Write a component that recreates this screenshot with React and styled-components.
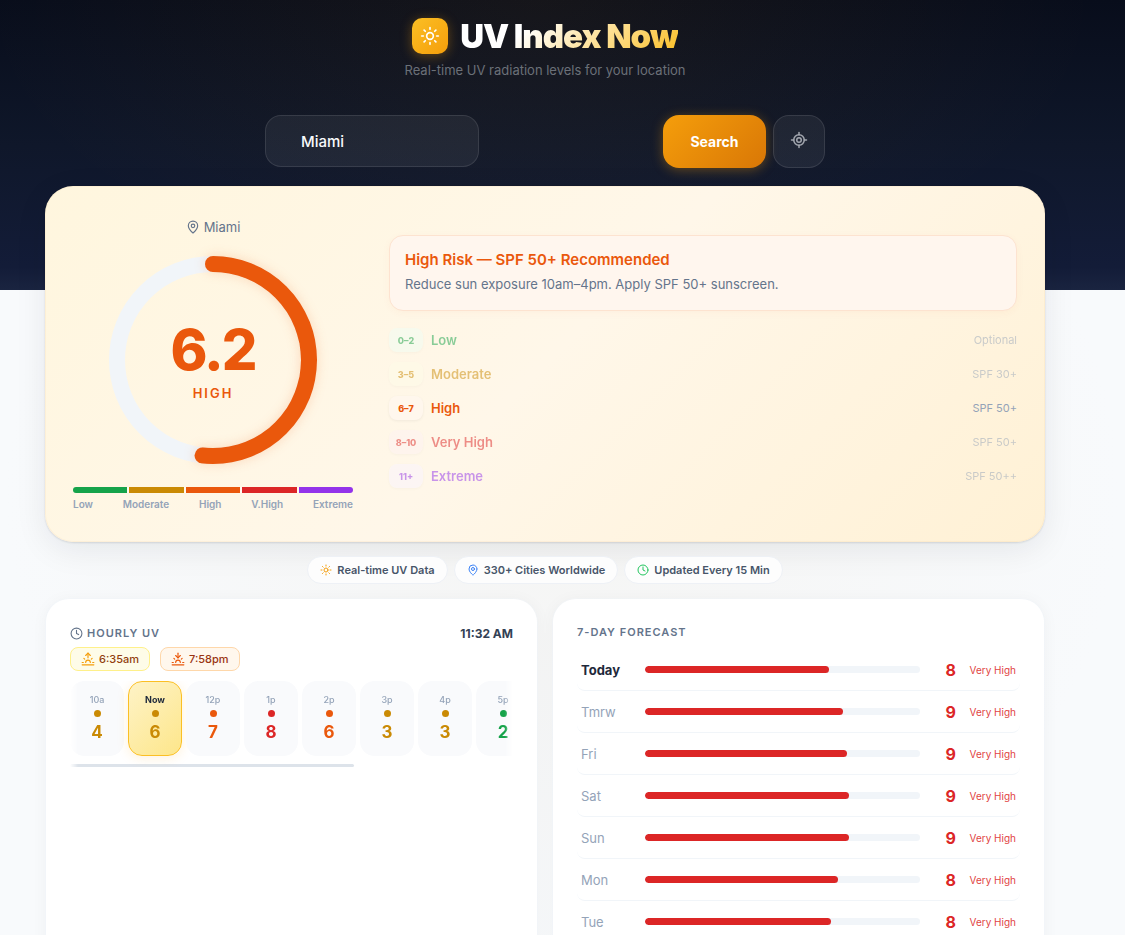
import React, { useState } from "react";
import styled, { createGlobalStyle } from "styled-components";
import { Clock, LocateFixed, MapPin, Sun, Sunrise, Sunset } from "lucide-react";

const body = `Inter, "Open Sans", sans-serif`;

const GlobalStyle = createGlobalStyle`
  * {
    box-sizing: border-box;
  }
  body {
    margin: 0;
    background-color: #f8fafc;
    font-family: ${body};
    color: #1e293b;
  }
  h1, h2, p, ul, ol {
    margin: 0;
    padding: 0;
  }
  ul, ol {
    list-style: none;
  }
  button, input {
    font-family: inherit;
  }
`;
const Page = styled.div`
  min-height: 100vh;
  padding: 18px 80px 24px 45px;
  background:
    radial-gradient(ellipse 50% 300px at 48% 0, rgba(245, 158, 11, 0.06), transparent) no-repeat,
    linear-gradient(180deg, #080d1b 0%, #0f172a 50%, #131c38 92%, #1a2440 100%) 0 0 / 100% 290px no-repeat,
    radial-gradient(ellipse at 50% 50%, #f5f5f4 0%, #f8fafc 70%);
`;
const Container = styled.div`
  max-width: 1000px;
  margin: 0 auto;
`;
const Header = styled.header`
  display: flex;
  flex-direction: column;
  align-items: center;
`;
const Brand = styled.div`
  display: flex;
  align-items: center;
  gap: 12px;
  height: 36px;
`;
const Logo = styled.span`
  width: 36px;
  height: 36px;
  border-radius: 10px;
  display: flex;
  align-items: center;
  justify-content: center;
  color: white;
  background: linear-gradient(135deg, #fbbf24, #f59e0b);
  box-shadow: 0 2px 12px rgba(245, 158, 11, 0.35);
`;
const Title = styled.h1`
  font-size: 33px;
  line-height: 38px;
  font-weight: 900;
  letter-spacing: -1px;
  color: transparent;
  background: linear-gradient(135deg, #ffffff 30%, #fbbf24 100%);
  background-clip: text;
`;
const Tagline = styled.p`
  margin-top: 6px;
  font-size: 13px;
  line-height: 20px;
  color: #6b7078;
`;
const SearchForm = styled.form`
  width: 100%;
  max-width: 560px;
  margin-top: 35px;
  display: flex;
  gap: 7px;
`;
const SearchField = styled.div`
  flex: 1;
`;
const SearchInput = styled.input`
  width: 214px;
  height: 52px;
  padding: 0 35px;
  border-radius: 16px;
  border: 1px solid rgba(255, 255, 255, 0.1);
  background-color: rgba(255, 255, 255, 0.06);
  color: #f8fafc;
  font-size: 15px;
  font-weight: 500;
  outline: none;
`;
const SearchButton = styled.button`
  width: 103px;
  height: 53px;
  border: none;
  border-radius: 16px;
  color: white;
  font-size: 14px;
  font-weight: 700;
  cursor: pointer;
  background: linear-gradient(135deg, #f59e0b, #d97706);
  box-shadow: 0 2px 12px rgba(245, 158, 11, 0.35);
`;
const LocateButton = styled.button`
  width: 52px;
  height: 53px;
  padding: 0 0 3px;
  display: flex;
  align-items: center;
  justify-content: center;
  border-radius: 16px;
  border: 1px solid rgba(255, 255, 255, 0.1);
  background-color: rgba(255, 255, 255, 0.06);
  color: #a3a7af;
  cursor: pointer;
`;
const Hero = styled.section`
  margin-top: 18px;
  padding: 31px 28px;
  display: flex;
  align-items: center;
  gap: 36px;
  border-radius: 28px;
  background: linear-gradient(135deg, #fff6de 0%, #fff7e9 50%, #fff1d5 100%);
  box-shadow:
    inset 0 0 0 1px rgba(234, 170, 80, 0.08),
    0 1px 2px rgba(15, 23, 42, 0.12),
    0 8px 32px rgba(15, 23, 42, 0.08);
`;
const Gauge = styled.div`
  width: 280px;
  flex-shrink: 0;
`;
const Place = styled.p`
  display: flex;
  align-items: center;
  justify-content: center;
  gap: 4px;
  font-size: 13px;
  line-height: 20px;
  color: #64748b;
`;
const Dial = styled.div`
  display: grid;
  place-items: center;
  margin: 13px 0 17px;

  & > * {
    grid-area: 1 / 1;
  }
`;
const DialSvg = styled.svg`
  display: block;
  overflow: visible;
`;
const Arc = styled.circle`
  filter: drop-shadow(0 0 6px rgba(234, 88, 12, 0.2));
`;
const Reading = styled.div`
  padding-top: 2px;
  text-align: center;
  color: #ea580c;
`;
const ReadingValue = styled.div`
  font-size: 56px;
  line-height: 60px;
  font-weight: 800;
  letter-spacing: -2px;
`;
const ReadingLevel = styled.div`
  margin-top: 4px;
  font-size: 13px;
  line-height: 18px;
  font-weight: 600;
  letter-spacing: 2px;
`;
const Scale = styled.div`
  display: flex;
  gap: 2px;
  height: 6px;
  border-radius: 3px;
  overflow: hidden;
  background-color: #fffaf2;
`;
const ScalePart = styled.span`
  flex: 1;
  background-color: ${(props) => props.$color};
`;
const ScaleLabels = styled.div`
  display: flex;
  justify-content: space-between;
  margin-top: 4px;
  font-size: 10px;
  line-height: 14px;
  font-weight: 600;
  color: #94a3b8;
`;
const Advice = styled.div`
  flex: 1;
  min-width: 0;
`;
const Alert = styled.div`
  padding: 14px 15px 16px;
  margin-bottom: 12px;
  border-radius: 14px;
  border: 1px solid #fde3d0;
  background-color: #fff6ee;
  box-shadow: 0 2px 8px rgba(234, 88, 12, 0.04);
`;
const AlertTitle = styled.h2`
  font-size: 15px;
  line-height: 20px;
  font-weight: 600;
  color: #ea580c;
`;
const AlertText = styled.p`
  margin-top: 4px;
  font-size: 13px;
  line-height: 20px;
  color: #64748b;
`;
const Level = styled.li`
  display: flex;
  align-items: center;
  gap: 8px;
  height: 34px;
  opacity: ${(props) => (props.$active ? 1 : 0.5)};
`;
const Range = styled.span`
  width: 34px;
  height: 24px;
  display: flex;
  align-items: center;
  justify-content: center;
  border-radius: 8px;
  font-size: 9px;
  font-weight: 800;
  color: ${(props) => props.$color};
  background-color: ${(props) => props.$bg};
  box-shadow: 0 1px 3px rgba(15, 23, 42, 0.06);
`;
const LevelName = styled.span`
  flex: 1;
  font-size: 13px;
  font-weight: 600;
  color: ${(props) => props.$color};
`;
const Spf = styled.span`
  font-size: 11px;
  color: #94a3b8;
`;
const Chips = styled.ul`
  margin: 14px 0;
  display: flex;
  justify-content: center;
  gap: 6px;
`;
const Chip = styled.li`
  height: 28px;
  padding: 0 12px;
  display: flex;
  align-items: center;
  gap: 5px;
  border-radius: 14px;
  border: 1px solid #eef1f6;
  background-color: #fdfdfd;
  font-size: 11px;
  font-weight: 600;
  color: #475569;

  & > svg {
    color: ${(props) => props.$color};
  }
`;
const Panels = styled.div`
  display: grid;
  grid-template-columns: 1fr 1fr;
  gap: 14px;
`;
const Panel = styled.section`
  min-width: 0;
  padding: 24px;
  border-radius: 24px;
  border: 1px solid rgba(241, 245, 249, 0.4);
  background-color: white;
  background-clip: padding-box;
  box-shadow: 0 2px 16px rgba(15, 23, 42, 0.04);
`;
const PanelHead = styled.div`
  display: flex;
  align-items: center;
  justify-content: space-between;
  height: 20px;
`;
const PanelTitle = styled.h2`
  display: flex;
  align-items: center;
  gap: 4px;
  font-size: 11px;
  line-height: 18px;
  font-weight: 600;
  letter-spacing: 1px;
  color: #64748b;
`;
const LocalTime = styled.time`
  font-size: 12px;
  font-weight: 700;
  color: #334155;
`;
const SunTimes = styled.div`
  display: flex;
  gap: 10px;
  margin: 4px 0 10px;
`;
const SunTime = styled.span`
  height: 24px;
  padding: 0 10px;
  display: flex;
  align-items: center;
  gap: 4px;
  border-radius: 8px;
  font-size: 11px;
  font-weight: 500;
  border: 1px solid ${(props) => (props.$set ? "#fed7aa" : "#fef08a")};
  background-color: ${(props) => (props.$set ? "#fff7ed" : "#fefce8")};
  color: ${(props) => (props.$set ? "#9a3412" : "#92400e")};

  & > svg {
    color: ${(props) => (props.$set ? "#ea580c" : "#f59e0b")};
  }
`;
const HourScroll = styled.div`
  overflow: hidden;
  mask-image: linear-gradient(90deg, transparent, black 8px, black calc(100% - 8px), transparent);
`;
const Hours = styled.ol`
  display: flex;
  gap: 4px;
  padding-bottom: 8px;
`;
const Hour = styled.li`
  flex: 0 0 54px;
  height: 75px;
  padding-top: 12px;
  display: flex;
  flex-direction: column;
  align-items: center;
  border-radius: 14px;
  border: 1px solid ${(props) => (props.$now ? "#fbbf24" : "#f9fafc")};
  background: ${(props) => (props.$now ? "linear-gradient(135deg, #fef3c7, #fde68a)" : "#f9fafc")};
  box-shadow: ${(props) => (props.$now ? "0 2px 12px rgba(245, 158, 11, 0.15)" : "none")};
`;
const HourLabel = styled.span`
  font-size: 9px;
  line-height: 12px;
  font-weight: ${(props) => (props.$now ? 700 : 500)};
  color: ${(props) => (props.$now ? "#1e293b" : "#94a3b8")};
`;
const Dot = styled.span`
  width: 7px;
  height: 7px;
  margin: 4px 0;
  border-radius: 50%;
  background-color: ${(props) => props.$color};
`;
const HourValue = styled.span`
  margin-top: 1px;
  font-size: 17px;
  line-height: 20px;
  font-weight: 700;
  color: ${(props) => props.$color};
`;
const ScrollThumb = styled.div`
  width: 64%;
  height: 3px;
  border-radius: 2px;
  background-color: #dde3ea;
`;
const Days = styled.ol`
  margin-top: 8px;
`;
const Day = styled.li`
  height: 42px;
  padding: 0 4px;
  display: grid;
  grid-template-columns: 52px 1fr 24px 48px;
  align-items: center;
  gap: 12px;
  border-radius: 8px;
  border-bottom: 1px solid #f1f5f9;
`;
const DayName = styled.span`
  font-size: 13px;
  font-weight: ${(props) => (props.$today ? 700 : 400)};
  color: ${(props) => (props.$today ? "#1e293b" : "#94a3b8")};
`;
const Track = styled.div`
  height: 7px;
  border-radius: 4px;
  overflow: hidden;
  background-color: #f1f5f9;
`;
const Fill = styled.div`
  height: 100%;
  border-radius: 4px;
  background-color: #dc2626;
`;
const DayValue = styled.span`
  font-size: 16px;
  font-weight: 700;
  text-align: right;
  color: #dc2626;
`;
const DayLevel = styled.span`
  font-size: 10px;
  text-align: right;
  white-space: nowrap;
  color: #e14444;
`;

const levels = [
  { name: "Low", short: "Low", range: "0–2", spf: "Optional", color: "#16a34a", bg: "#f0fdf4" },
  { name: "Moderate", short: "Moderate", range: "3–5", spf: "SPF 30+", color: "#ca8a04", bg: "#fefce8" },
  { name: "High", short: "High", range: "6–7", spf: "SPF 50+", color: "#ea580c", bg: "#fff7ed" },
  { name: "Very High", short: "V.High", range: "8–10", spf: "SPF 50+", color: "#dc2626", bg: "#fef2f2" },
  { name: "Extreme", short: "Extreme", range: "11+", spf: "SPF 50++", color: "#9333ea", bg: "#faf5ff" },
];
const hours = [
  { label: "10a", uv: 4, color: "#ca8a04" },
  { label: "Now", uv: 6, color: "#ca8a04" },
  { label: "12p", uv: 7, color: "#ea580c" },
  { label: "1p", uv: 8, color: "#dc2626" },
  { label: "2p", uv: 6, color: "#ea580c" },
  { label: "3p", uv: 3, color: "#ca8a04" },
  { label: "4p", uv: 3, color: "#ca8a04" },
  { label: "5p", uv: 2, color: "#16a34a" },
];
const days = [
  { name: "Today", uv: 8, fill: 67 },
  { name: "Tmrw", uv: 9, fill: 72 },
  { name: "Fri", uv: 9, fill: 73.5 },
  { name: "Sat", uv: 9, fill: 74 },
  { name: "Sun", uv: 9, fill: 74 },
  { name: "Mon", uv: 8, fill: 70 },
  { name: "Tue", uv: 8, fill: 67.5 },
];

const circumference = 2 * Math.PI * 96;

const App = () => {
  const [city, setCity] = useState("Miami");
  return (
    <Page>
      <GlobalStyle />
      <Container>
        <Header>
          <Brand>
            <Logo>
              <Sun size={20} />
            </Logo>
            <Title>UV Index Now</Title>
          </Brand>
          <Tagline>Real-time UV radiation levels for your location</Tagline>
          <SearchForm onSubmit={(e) => e.preventDefault()}>
            <SearchField>
              <SearchInput aria-label="City" value={city} onChange={(e) => setCity(e.target.value)} />
            </SearchField>
            <SearchButton type="submit">Search</SearchButton>
            <LocateButton type="button" aria-label="Use my location">
              <LocateFixed size={18} />
            </LocateButton>
          </SearchForm>
        </Header>
        <Hero>
          <Gauge>
            <Place>
              <MapPin size={14} />
              Miami
            </Place>
            <Dial>
              <DialSvg width="220" height="220" viewBox="0 0 220 220" aria-hidden="true">
                <circle cx="110" cy="110" r="96" fill="none" stroke="#f1f5f9" strokeWidth="16" />
                <Arc
                  cx="110"
                  cy="110"
                  r="96"
                  fill="none"
                  stroke="#ea580c"
                  strokeWidth="16"
                  strokeLinecap="round"
                  strokeDasharray={`${(circumference * 6.2) / 12} ${circumference}`}
                  transform="rotate(-90 110 110)"
                />
              </DialSvg>
              <Reading>
                <ReadingValue>6.2</ReadingValue>
                <ReadingLevel>HIGH</ReadingLevel>
              </Reading>
            </Dial>
            <Scale>
              {levels.map((level) => (
                <ScalePart key={level.name} $color={level.color} />
              ))}
            </Scale>
            <ScaleLabels>
              {levels.map((level) => (
                <span key={level.name}>{level.short}</span>
              ))}
            </ScaleLabels>
          </Gauge>
          <Advice>
            <Alert>
              <AlertTitle>High Risk — SPF 50+ Recommended</AlertTitle>
              <AlertText>Reduce sun exposure 10am–4pm. Apply SPF 50+ sunscreen.</AlertText>
            </Alert>
            <ul>
              {levels.map((level) => (
                <Level key={level.name} $active={level.name === "High"}>
                  <Range $color={level.color} $bg={level.bg}>
                    {level.range}
                  </Range>
                  <LevelName $color={level.color}>{level.name}</LevelName>
                  <Spf>{level.spf}</Spf>
                </Level>
              ))}
            </ul>
          </Advice>
        </Hero>
        <Chips>
          <Chip $color="#f59e0b">
            <Sun size={12} />
            Real-time UV Data
          </Chip>
          <Chip $color="#3b82f6">
            <MapPin size={12} />
            330+ Cities Worldwide
          </Chip>
          <Chip $color="#22c55e">
            <Clock size={12} />
            Updated Every 15 Min
          </Chip>
        </Chips>
        <Panels>
          <Panel>
            <PanelHead>
              <PanelTitle>
                <Clock size={13} />
                HOURLY UV
              </PanelTitle>
              <LocalTime>11:32 AM</LocalTime>
            </PanelHead>
            <SunTimes>
              <SunTime>
                <Sunrise size={14} />
                6:35am
              </SunTime>
              <SunTime $set>
                <Sunset size={14} />
                7:58pm
              </SunTime>
            </SunTimes>
            <HourScroll>
              <Hours>
                {hours.map((hour) => (
                  <Hour key={hour.label} $now={hour.label === "Now"}>
                    <HourLabel $now={hour.label === "Now"}>{hour.label}</HourLabel>
                    <Dot $color={hour.color} />
                    <HourValue $color={hour.color}>{hour.uv}</HourValue>
                  </Hour>
                ))}
              </Hours>
              <ScrollThumb />
            </HourScroll>
          </Panel>
          <Panel>
            <PanelTitle>7-DAY FORECAST</PanelTitle>
            <Days>
              {days.map((day) => (
                <Day key={day.name}>
                  <DayName $today={day.name === "Today"}>{day.name}</DayName>
                  <Track>
                    <Fill style={{ width: `${day.fill}%` }} />
                  </Track>
                  <DayValue>{day.uv}</DayValue>
                  <DayLevel>Very High</DayLevel>
                </Day>
              ))}
            </Days>
          </Panel>
        </Panels>
      </Container>
    </Page>
  );
};

export default App;
